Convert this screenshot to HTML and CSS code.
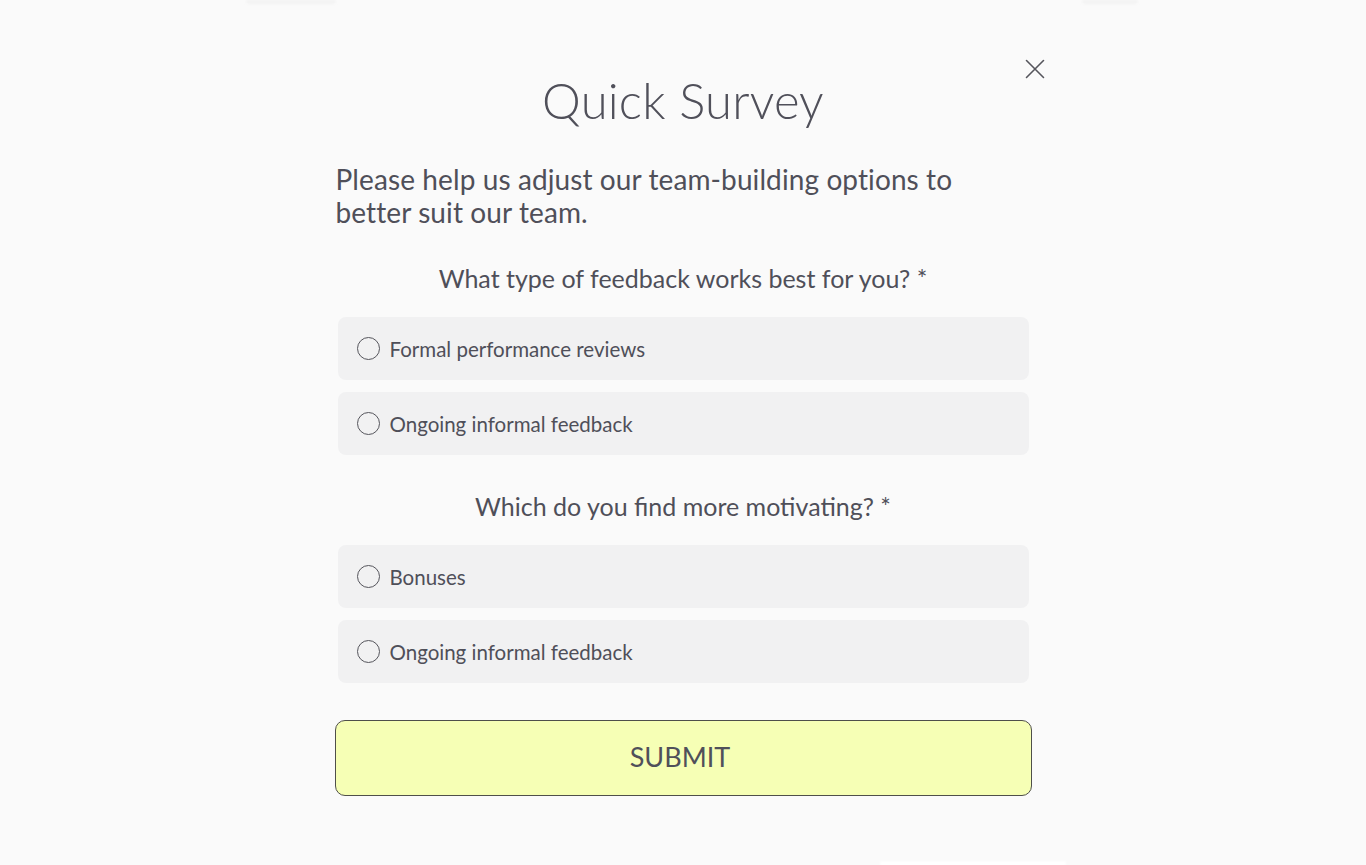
FILE: index.html
```html
<!DOCTYPE html>
<html lang="en">
<head>
<meta charset="utf-8">
<title>Quick Survey</title>
<link rel="stylesheet" href="styles.css">
</head>
<body>
<div class="ghost ghost-tl"></div>
<div class="ghost ghost-tr"></div>
<div class="ghost ghost-br"></div>
<main class="modal">
  <button class="close" aria-label="Close">
    <svg width="20" height="20" viewBox="0 0 20 20"><path d="M1.5 1.5 L18.5 18.5 M18.5 1.5 L1.5 18.5" stroke="#55555c" stroke-width="1.6" fill="none" stroke-linecap="round"/></svg>
  </button>
  <h1 class="title">Quick Survey</h1>
  <p class="intro">Please help us adjust our team-building options to better suit our team.</p>
  <form class="form">
    <fieldset class="question">
      <legend class="question-label">What type of feedback works best for you? *</legend>
      <label class="option"><input type="radio" name="q1"><span class="radio"></span><span>Formal performance reviews</span></label>
      <label class="option"><input type="radio" name="q1"><span class="radio"></span><span>Ongoing informal feedback</span></label>
    </fieldset>
    <fieldset class="question">
      <legend class="question-label">Which do you find more motivating? *</legend>
      <label class="option"><input type="radio" name="q2"><span class="radio"></span><span>Bonuses</span></label>
      <label class="option"><input type="radio" name="q2"><span class="radio"></span><span>Ongoing informal feedback</span></label>
    </fieldset>
    <button type="button" class="submit">SUBMIT</button>
  </form>
</main>
</body>
</html>
```

FILE: styles.css
```css
html, body {
  margin: 0;
  padding: 0;
}
body {
  background: #fafafa;
  font-family: Lato, "Open Sans", sans-serif;
  color: #4f4f59;
  min-height: 865px;
  position: relative;
  overflow: hidden;
}
.ghost {
  position: absolute;
  background: #f3f3f3;
  border-radius: 0 0 4px 4px;
  filter: blur(1px);
}
.ghost-tl { left: 246px; top: 0; width: 90px; height: 4px; }
.ghost-tr { left: 1082px; top: 0; width: 56px; height: 4px; }
.ghost-br { left: 880px; top: 861px; width: 186px; height: 6px; background: #ffffff; }

.modal {
  position: relative;
  width: 697px;
  margin: 0 auto;
  padding-top: 69px;
  display: flex;
  flex-direction: column;
}
.close {
  position: absolute;
  top: 59px;
  right: -13px;
  width: 20px;
  height: 20px;
  padding: 0;
  border: 0;
  background: none;
  cursor: pointer;
  display: flex;
}
.title {
  margin: 0;
  font-size: 49px;
  font-weight: 300;
  line-height: 62px;
  text-align: center;
  color: #50505a;
  letter-spacing: 0.2px;
}
.intro {
  margin: 32px 0 0 1px;
  font-size: 28px;
  line-height: 33px;
  font-weight: 400;
  letter-spacing: 0.1px;
  color: #4f4f59;
  max-width: 640px;
}
.form {
  display: flex;
  flex-direction: column;
  margin-top: 35px;
}
.question {
  margin: 0 0 37px;
  padding: 0;
  border: 0;
  display: flex;
  flex-direction: column;
  gap: 12px;
  align-items: center;
}
.question-label {
  padding: 0;
  width: 100%;
  text-align: center;
  font-size: 25px;
  line-height: 29px;
  margin-bottom: 12px;
  float: left;
}
.option {
  box-sizing: border-box;
  width: 691px;
  height: 63px;
  background: #f1f1f2;
  border-radius: 8px;
  display: flex;
  align-items: center;
  padding-left: 19px;
  gap: 10px;
  font-size: 20.5px;
  color: #4f4f59;
  cursor: pointer;
}
.option input {
  display: none;
}
.radio {
  box-sizing: border-box;
  width: 23px;
  height: 23px;
  border: 1.5px solid #55555c;
  border-radius: 50%;
  flex: none;
}
.submit {
  box-sizing: border-box;
  width: 697px;
  height: 76px;
  margin: 0;
  background: #f6ffb5;
  border: 1.6px solid #4f4f4a;
  border-radius: 10px;
  font-family: Lato, "Open Sans", sans-serif;
  font-size: 27px;
  letter-spacing: 0;
  color: #50505a;
  padding: 0 6px 4px 0;
  cursor: pointer;
}
```
